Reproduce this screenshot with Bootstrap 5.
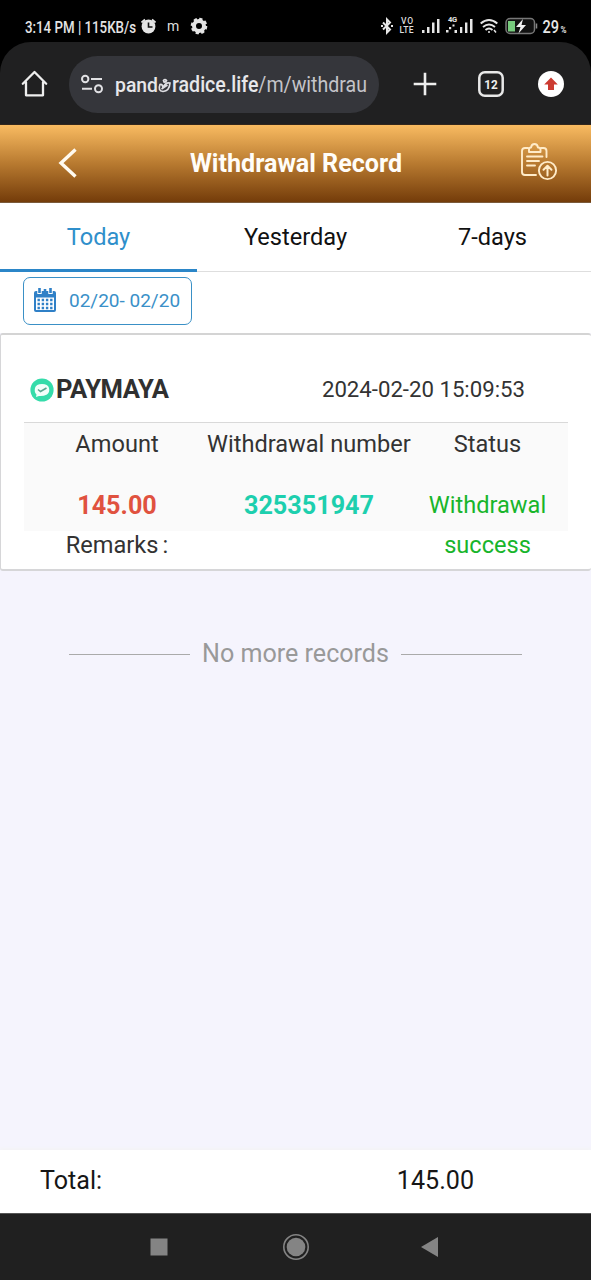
<!DOCTYPE html>
<html lang="en">
<head>
<meta charset="utf-8">
<meta name="viewport" content="width=device-width, initial-scale=1">
<title>Withdrawal Record</title>
<link rel="stylesheet" href="https://cdn.jsdelivr.net/npm/bootstrap@5.3.0/dist/css/bootstrap.min.css">
<style>
  html, body { height: 1280px; overflow: hidden; }
  body { font-family: Roboto, "Liberation Sans", sans-serif; font-size: 23.6px; line-height: 1.2; color: #333; background: #f5f4fd; }
  svg { display: block; flex: none; overflow: visible; }
  svg text { font-family: Roboto, "Liberation Sans", sans-serif; }
  .phone { height: 1280px; }
  .top-shell { background: #000; }
  .status-row { height: 42px; padding: 10px 24px 0 25px; }
  .browser-row { height: 83px; background: #202021; border-radius: 31px 31px 0 0; padding: 2px 27px 0 20px; border-bottom: 1px solid #33271c; }
  .url-pill { width: 310px; height: 57px; background: #35363b; border-radius: 29px; margin-left: 19px; padding-left: 12px; }
  .browser-keys { padding-left: 34px; }
  .page-head { height: 78px; background: linear-gradient(#f9bb61, #b87a30 50%, #743c0a); border-bottom: 1px solid #7b5a3a; color: #fff; padding: 0 34px 0 58px; }
  .page-head .back { margin-top: -2px; }
  .page-head .report { margin-top: -4px; }
  .page-title { font-size: 25.1px; font-weight: 700; padding: 1px 7px 0 0; color: #fffdf8; }
  .day-tabs { height: 69px; background: #fff; border-bottom: 1px solid #dedede; }
  .day-tabs .nav-link { height: 69px; padding: 2px 0 0; color: #111; border-radius: 0; border-bottom: 3px solid transparent; }
  .day-tabs .nav-link.active { color: #2f8fcb; border-bottom-color: #2b86c8; }
  .filter-row { height: 61px; background: #fff; padding: 5px 23px 0; }
  .date-btn { width: 169px; height: 48px; border: 1px solid #3a90c6; border-radius: 7px; color: #3a90c8; font-size: 19px; padding: 0 0 1px 10px; line-height: 1; }
  .date-btn span { margin-left: 13px; }
  .record { height: 238px; background: #fff; border: 1px solid #d6d6d8; border-top: 2px solid #d4d4d4; border-right: 0; border-bottom-width: 2px; border-radius: 3px; padding: 0 23px; }
  .record-head { height: 88px; border-bottom: 1px solid #d9d9d9; padding: 22px 43px 0 6px; }
  .record-head .pay-name { font-size: 25.6px; letter-spacing: -.4px; font-weight: 700; line-height: 29px; color: #303030; margin-left: 2px; }
  .record-head .stamp { font-size: 22.2px; }
  .record-cells { height: 108px; background: #fafafa; }
  .record-cells .cell-h { height: 42px; line-height: 42px; }
  .record-cells .cell-v { margin-top: 20px; line-height: 40px; height: 40px; }
  .record-cells .cell-v.fw-bold { font-size: 25.2px; padding-top: 1px; }
  .remark { line-height: 40px; }
  .w-a { width: 186px; } .w-b { width: 196px; margin-left: -1px; } .w-c { width: 162px; padding-left: 3px; }
  .w-b > .cell-h { margin-left: -2px; } .w-b > .cell-v { padding-left: 4px; }
  .c-red { color: #e0523f; } .c-teal { color: #1dcfae; } .c-green { color: #18b52b; }
  .more-row { margin-top: 68px; color: #999; font-size: 25.1px; line-height: 30px; }
  .rule { width: 121px; height: 1px; background: #aaa; }
  .total-row { height: 63px; background: #fff; color: #161616; padding: 0 117px 0 40px; font-size: 25.1px; box-shadow: 0 -2px 3px #f4f4f6; }
  .nav-keys { height: 67px; background: #202020; border-top: 1px solid #555; padding-left: 150px; }
  .key-home { margin-left: 114px; }
  .key-back { margin-left: 111px; }
</style>
<script src="https://cdn.jsdelivr.net/npm/bootstrap@5.3.0/dist/js/bootstrap.bundle.min.js"></script>
</head>
<body>
<div class="phone d-flex flex-column">
  <header class="top-shell">
    <div class="status-row d-flex justify-content-between">
      <div class="d-flex">
        <svg width="113" height="32" fill="#e4e4e4"><text x="0" y="22.500" font-size="17" font-weight="500" textLength="111" lengthAdjust="spacingAndGlyphs">3:14 PM | 115KB/s</text></svg>
        <svg width="20" height="32" viewBox="0 0 20 32" fill="#e4e4e4"><circle cx="10.500" cy="16.500" r="6.900"/><path d="M3.500 12.500 7 9.500M14 9.500l3.500 3" stroke="#e4e4e4" stroke-width="1.800" fill="none"/><path d="M10.500 12.500v4.500h4" stroke="#111" stroke-width="1.600" fill="none"/></svg>
        <svg width="24" height="32" class="ms-2" fill="#ddd"><text x="1" y="20.500" font-size="14">m</text></svg>
        <svg width="20" height="32" viewBox="-9 -16 20 32"><circle r="5" fill="none" stroke="#e4e4e4" stroke-width="4"/><circle r="7" fill="none" stroke="#e4e4e4" stroke-width="2.600" stroke-dasharray="3.200 2.298"/></svg>
      </div>
      <div class="d-flex">
        <svg width="18" height="32" viewBox="2 0 18 32" fill="none" stroke="#e6e6e6" stroke-width="2"><path d="M3 12.500l7 7-3 3V9.500l3 3-7 7"/><path d="M1 16h2M11 16h2"/></svg>
        <svg width="22" height="32" fill="#ddd" font-weight="500"><text x="1" y="14" font-size="8.500" textLength="12">VO</text><text x="-.5" y="22.800" font-size="8.500" textLength="14">LTE</text></svg>
        <svg width="24" height="32" viewBox="1 0 24 32" fill="#e6e6e6"><path d="M1 20h2.500v3H1zM6 17h2.500v6H6zM11 12.500h2.500V23H11zM16 9h2.500v14H16z"/></svg>
        <svg width="35" height="32" viewBox="1 0 35 32" fill="#e6e6e6"><text x="3" y="12" font-size="7.500" font-weight="700" textLength="9">4G</text><path d="M1 20h2.500v2.500H1zM4 17h2.200v2.200H4zM7.500 14.500h2v2h-2zM9.500 20H12v3H9.500zM15 17h2.300v6H15zM20 12.500h2.400V23H20zM25 9h2.500v14H25z"/></svg>
        <svg width="25" height="32" viewBox="1 0 25 32" fill="none" stroke="#e6e6e6" stroke-width="2"><path d="M.7 13.500q8.300-7 16.600 0M3 17q6-5 12 0M5.500 20q3.500-3 7 0"/><circle cx="9" cy="22" r="1" fill="#e6e6e6" stroke="none"/><path d="M14 20l2 2.500" stroke-width="1.500"/></svg>
        <svg width="37" height="32" viewBox="1 0 37 32"><rect x="1" y="8.500" width="28.500" height="15" rx="4" fill="#111" stroke="#777" stroke-width="1.500"/><path d="M31.500 13.500v5" stroke="#888" stroke-width="1.500"/><path d="M3 11h7v10.500H3z" fill="#77cb7d"/><path d="M18 9l-7 8h4.500l-2 6.500 7.500-8.500h-4.500z" fill="#f2f2f2"/></svg>
        <svg width="24" height="32" fill="#e6e6e6"><text x="-.5" y="22.500" font-size="18" font-weight="500" textLength="16.500" lengthAdjust="spacingAndGlyphs">29</text><text x="17.500" y="22.500" font-size="9.500" font-weight="700" textLength="6" lengthAdjust="spacingAndGlyphs">%</text></svg>
      </div>
    </div>
    <div class="browser-row d-flex align-items-center">
      <svg width="30" height="30" viewBox="0 0 30 30" fill="none" stroke="#eee" stroke-width="2.300" stroke-linejoin="round" stroke-linecap="round"><path d="M2.800 14.800 14.500 3l11.700 11.800M6 13.300v13h17v-13"/></svg>
      <div class="url-pill d-flex align-items-center">
        <svg width="33" height="28" viewBox="0 0 33 28" fill="none" stroke="#e1e1e4" stroke-width="2"><circle cx="4.200" cy="9" r="3.200"/><path d="M10 9h11M1 18.800h10"/><circle cx="17.500" cy="18.800" r="3.500"/></svg>
        <svg width="256" height="44" viewBox="0 0 256 44"><text x="1" y="29.500" font-size="21" font-weight="500" fill="#e7e7ea" textLength="43" lengthAdjust="spacingAndGlyphs">pand</text><g fill="none" stroke="#dedee2" stroke-width="1.700"><path d="M46 22.500q-2.500 6.500 3 7 6.500-.5 7-8.500-5-1-7 5-.5-4.500-3-3.500zM49.500 18.500q1.500-2 3 0-1 2-2.500 1.500zM47.500 27l6-4"/></g><text x="58" y="29.500" font-size="21.500" font-weight="500" fill="#e7e7ea" textLength="195" lengthAdjust="spacingAndGlyphs">radice.life<tspan font-weight="400" fill="#c4c4c9">/m/withdrau</tspan></text></svg>
      </div>
      <div class="browser-keys d-flex flex-fill justify-content-between align-items-center">
        <svg width="24" height="24" viewBox="0 0 24 24" stroke="#eee" stroke-width="2.600"><path d="M12 .7v22.600M.7 12h22.600"/></svg>
        <svg width="28" height="28" viewBox="3 0 28 28" class="ms-2 me-1"><rect x="2.300" y="2.300" width="23.400" height="23.400" rx="5.500" fill="none" stroke="#e8e8e8" stroke-width="2.500" transform="translate(4)"/><text x="18" y="18.500" font-size="13" font-weight="700" fill="#eee" text-anchor="middle" textLength="13.500" lengthAdjust="spacingAndGlyphs">12</text></svg>
        <svg width="26" height="26" viewBox="0 0 26 26"><circle cx="13" cy="13" r="13" fill="#fff"/><path d="M13 6.500l6.800 7H16V19h-6v-5.500H6.200z" fill="#cc3b31"/></svg>
      </div>
    </div>
  </header>

  <div class="page-head d-flex align-items-center justify-content-between">
    <svg class="back" width="20" height="32" viewBox="0 0 20 32" fill="none" stroke="#fffaf0" stroke-width="3.400"><path d="M17.500 2.500 3 16l14.500 13.500"/></svg>
    <h1 class="page-title m-0 text-nowrap">Withdrawal Record</h1>
    <svg class="report" width="36" height="38" viewBox="0 1 36 38" fill="none" stroke="#ffebc8" stroke-width="1.900" stroke-linecap="round" stroke-linejoin="round"><path d="M7 6H4q-3 0-3 3v21q0 3 3 3h11M20 6h2.500q3 0 3 3v6M8 10V7.500q0-2 2-2 .5-3.500 3.500-3.500T17 5.500q2.500 0 2.500 2V10zM6 14.500h15.500M6 19h12M6 23.500h8"/><circle cx="26.500" cy="28.500" r="8.600"/><path d="M26.500 33.500v-9.500M22.500 27.800l4-4 4 4" stroke-width="2"/></svg>
  </div>

  <nav class="nav nav-fill day-tabs flex-nowrap">
    <a class="nav-link active d-flex align-items-center justify-content-center col-4" href="#">Today</a>
    <a class="nav-link d-flex align-items-center justify-content-center col-4" href="#">Yesterday</a>
    <a class="nav-link d-flex align-items-center justify-content-center col-4" href="#">7-days</a>
  </nav>

  <div class="filter-row">
    <button type="button" class="btn date-btn d-flex align-items-center text-nowrap">
      <svg width="22" height="25" viewBox="0 0 22 25"><path d="M0 5q0-2 2-2h18q2 0 2 2v17q0 2-2 2H2q-2 0-2-2z" fill="#2f80c7"/><path d="M2 9.500h18V22H2z" fill="#fff"/><path d="M5.500 1v5M16.500 1v5" stroke="#fff" stroke-width="4.400"/><path d="M5.500 0v5M11 1v3M16.500 0v5" stroke="#2f80c7" stroke-width="2.600"/><path d="M3.500 12h15M3.500 16h15M3.500 20h15" stroke="#2f80c7" stroke-width="2.400" stroke-dasharray="2.400 1.800"/></svg>
      <span>02/20- 02/20</span>
    </button>
  </div>

  <section class="record">
    <div class="record-head d-flex align-items-center justify-content-between">
      <div class="d-flex align-items-center">
        <svg width="24" height="24" viewBox="0 0 24 24"><circle cx="12" cy="12" r="11.600" fill="#35dcaa"/><path d="M5 10q1-4 7-4t7 4q1 4-2 6.500-4 2-8 1.500l-3 1 .5-2.500Q4 14 5 10z" fill="#f2fffa"/><path d="M8 11.500l2.500 2 6-3.500" fill="none" stroke="#5aa590" stroke-width="1.600"/></svg>
        <span class="pay-name">PAYMAYA</span>
      </div>
      <span class="stamp">2024-02-20 15:09:53</span>
    </div>
    <div class="record-cells d-flex text-center text-nowrap">
      <div class="w-a"><div class="cell-h">Amount</div><div class="cell-v c-red fw-bold">145.00</div><div class="remark">Remarks<span class="ms-1">:</span></div></div>
      <div class="w-b"><div class="cell-h">Withdrawal number</div><div class="cell-v c-teal fw-bold">325351947</div></div>
      <div class="w-c"><div class="cell-h">Status</div><div class="cell-v c-green text-wrap">Withdrawal success</div></div>
    </div>
  </section>

  <div class="more-row d-flex align-items-center justify-content-center">
    <span class="rule"></span><span class="px-2 mx-1">No more records</span><span class="rule"></span>
  </div>

  <footer class="mt-auto">
    <div class="total-row d-flex align-items-center justify-content-between"><span>Total:</span><span>145.00</span></div>
    <div class="nav-keys d-flex align-items-center">
      <svg width="18" height="20" viewBox="0 0 18 20"><path d="M.5 1.500h17v17H.5z" fill="#848484"/></svg>
      <svg class="key-home" width="28" height="28" viewBox="0 0 28 28"><circle cx="14" cy="14" r="12.200" fill="none" stroke="#848484" stroke-width="1.600"/><circle cx="14" cy="14" r="9.300" fill="#848484"/></svg>
      <svg class="key-back" width="18" height="20" viewBox="0 0 18 20"><path d="M17 0v20L0 10z" fill="#848484"/></svg>
    </div>
  </footer>
</div>
</body>
</html>
